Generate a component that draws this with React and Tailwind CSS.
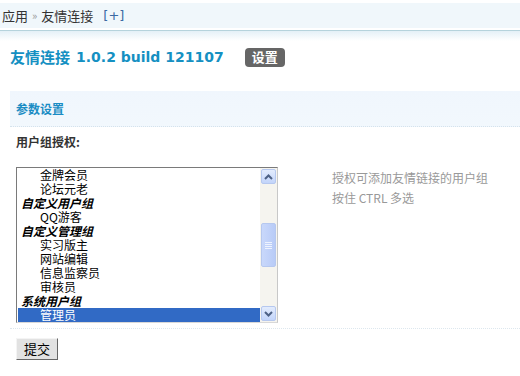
import React from "react";

const items = [
  { t: "金牌会员", g: false },
  { t: "论坛元老", g: false },
  { t: "自定义用户组", g: true },
  { t: "QQ游客", g: false },
  { t: "自定义管理组", g: true },
  { t: "实习版主", g: false },
  { t: "网站编辑", g: false },
  { t: "信息监察员", g: false },
  { t: "审核员", g: false },
  { t: "系统用户组", g: true },
  { t: "管理员", g: false, sel: true },
];

function ArrowBtn({ up }) {
  return (
    <div className="w-[15px] h-[15px] rounded-[2px] border border-[#b6c8ef] bg-gradient-to-b from-[#e3ecfd] to-[#c2d4fa] flex items-center justify-center">
      <svg width="9" height="6" viewBox="0 0 9 6">
        <path
          d={up ? "M1 5 L4.5 1.5 L8 5" : "M1 1 L4.5 4.5 L8 1"}
          fill="none"
          stroke="#4d6185"
          strokeWidth="2"
        />
      </svg>
    </div>
  );
}

export default function App() {
  return (
    <div
      className="w-[520px] h-[376px] bg-white overflow-hidden text-[12px] text-[#333]"
      style={{ fontFamily: '"Noto Sans CJK SC", "Liberation Sans", sans-serif' }}
    >
      <div className="h-[3px]" />
      <div className="h-[25px] bg-[#f0f7fb] flex items-center pl-[2px] text-[13px] text-[#333] gap-[4px]">
        <span>应用</span>
        <span className="text-[#999] text-[11px]">»</span>
        <span>友情连接</span>
        <span className="ml-[6px] text-[#3c6aa3]" style={{ fontFamily: '"DejaVu Sans", sans-serif' }}>[+]</span>
      </div>
      <div className="h-[2px]" />
      <div className="h-[1px] bg-[#b5d3dc]" />
      <div className="h-[10px] bg-gradient-to-b from-[#e4f0f7] to-white" />

      <div className="h-[30px] flex items-center pl-[10px] pt-[2px]">
        <span className="text-[15px] font-bold text-[#1590c2]">友情连接</span>
        <span
          className="ml-[6px] text-[14px] font-bold text-[#1590c2]"
          style={{ fontFamily: '"DejaVu Sans", sans-serif' }}
        >
          1.0.2 build 121107
        </span>
        <span className="ml-[21px] h-[19px] px-[7px] rounded-[4px] bg-[#666] text-white text-[13px] font-bold flex items-center">
          设置
        </span>
      </div>

      <div className="h-[20px]" />
      <div className="ml-[10px] h-[36px] bg-gradient-to-b from-[#f0f6fd] to-[#f2f8fd] border-b border-dotted border-[#d5e3ec] flex items-center pl-[6px]">
        <span className="text-[12px] font-bold text-[#1a8cc4]">参数设置</span>
      </div>

      <div className="h-[24px] flex items-end pl-[16px]">
        <span className="font-bold text-[12px] text-[#333]">用户组授权:</span>
      </div>
      <div className="h-[16px]" />

      <div className="flex pl-[16px]">
        <div className="w-[262px] h-[156px] border border-[#7a7a7a] border-r-[#c8c8c8] border-b-[#d8d8d8] flex bg-white">
          <div className="flex-1 pl-[1px]">
            {items.map((it, i) => (
              <div
                key={i}
                className={
                  "h-[14px] leading-[14px] text-[12px] whitespace-nowrap " +
                  (it.g
                    ? "font-bold italic text-[#000] pl-[3px]"
                    : it.sel
                    ? "bg-[#316ac5] text-white pl-[22px]"
                    : "text-[#000] pl-[22px]")
                }
              >
                {it.t}
              </div>
            ))}
          </div>
          <div className="w-[17px] bg-[#f5f4ef] flex flex-col items-center py-[1px]">
            <ArrowBtn up />
            <div className="h-[39px]" />
            <div className="w-[15px] h-[44px] rounded-[2px] border border-[#b6c8ef] bg-gradient-to-r from-[#c9d8fb] to-[#b8cbf7] flex flex-col items-center justify-center gap-[1px]">
              <div className="w-[7px] h-[1px] bg-[#eef3fe]" />
              <div className="w-[7px] h-[1px] bg-[#eef3fe]" />
              <div className="w-[7px] h-[1px] bg-[#eef3fe]" />
              <div className="w-[7px] h-[1px] bg-[#eef3fe]" />
            </div>
            <div className="flex-1" />
            <ArrowBtn />
          </div>
        </div>
        <div className="ml-[54px] pt-[1px] text-[12px] text-[#999] leading-[20px]">
          <div>授权可添加友情链接的用户组</div>
          <div>按住 CTRL 多选</div>
        </div>
      </div>

      <div className="h-[5px]" />
      <div className="ml-[10px] border-t border-dotted border-[#dde7ee]" />
      <div className="h-[9px]" />
      <div className="pl-[16px]">
        <button className="w-[42px] h-[22px] bg-[#e2e2e2] border border-[#f4f4f4] border-r-[#666] border-b-[#666] text-[13px] text-black flex items-center justify-center">
          提交
        </button>
      </div>
    </div>
  );
}
